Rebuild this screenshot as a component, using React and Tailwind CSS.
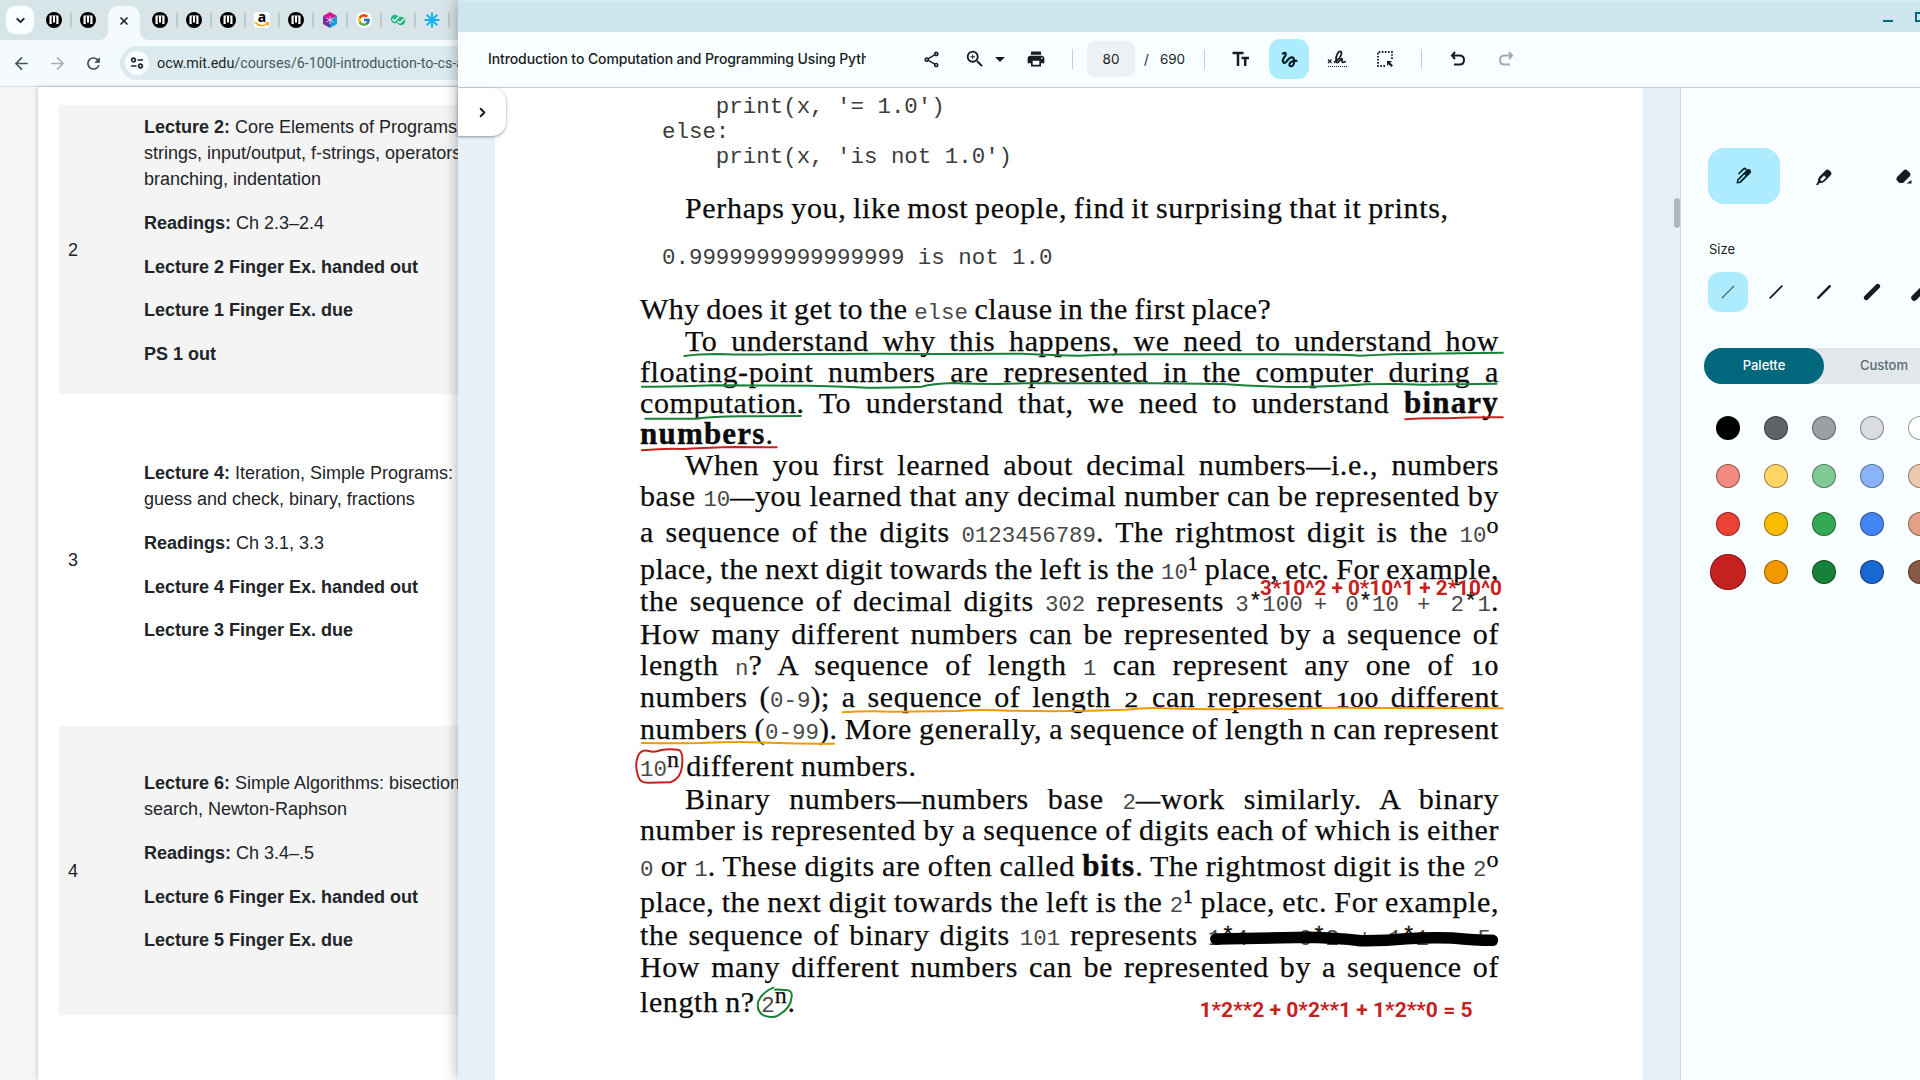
import React from "react";
import { ChevronDown, X, ArrowLeft, ArrowRight, ChevronRight } from "lucide-react";
import {
  MdOutlineShare, MdOutlineZoomIn, MdPrint, MdArrowDropDown, MdRefresh, MdGesture,
} from "react-icons/md";
import { FcGoogle } from "react-icons/fc";

const M = ({ children, className = "" }) => (
  <span className={`font-['Liberation_Mono',monospace] text-[22.450px] leading-none text-[#484848] tracking-normal [word-spacing:0px] [-webkit-text-stroke:0px] ${className}`}>{children}</span>
);
const A = () => <span className="align-[3px] leading-[0] text-[#111] [-webkit-text-stroke:0.3px_#111]">*</span>;
const Sup = ({ children }) => <span className="align-[9px] text-[24px] leading-[0]">{children}</span>;
const SupOne = () => <span className="align-[9px] text-[19px] leading-[0] [-webkit-text-stroke:0.5px_black]">1</span>;
const Old = ({ children, className = "mx-[3px]" }) => <span className={`inline-block scale-x-[1.25] text-[22px] leading-none tracking-[0.5px] [-webkit-text-stroke:0.4px_black] ${className}`}>{children}</span>;
const B = ({ children }) => <b className="text-[31px] leading-none tracking-[1.2px] [-webkit-text-stroke:0.4px_#0c0c0c]">{children}</b>;
const Dash = () => <span className="text-[24px] leading-none align-[1px] [-webkit-text-stroke:0.5px_#0c0c0c]">—</span>;

const Mit = () => (
  <svg width="16" height="16" viewBox="0 0 16 16">
    <circle cx="8" cy="8" r="8" fill="#000" />
    <path d="M3.500 3.500h9V12h-2.300V5.700H9.200V10.500H6.800V5.700H5.800V12H3.500z" fill="#fff" />
    <path d="M6.300 4v7M9.700 4v7" stroke="#000" strokeWidth="1" />
  </svg>
);
const Amazon = () => (
  <span className="flex h-4 w-4 items-center justify-center rounded-sm bg-white">
    <svg width="16" height="16" viewBox="0 0 16 16">
      <text x="8" y="9.500" textAnchor="middle" fontSize="14" fontWeight="700" fontFamily="Open Sans, sans-serif">a</text>
      <path d="M1 10.500q6 5.500 12 1.500M11.500 11h3l-.6 2.700" fill="none" stroke="#f90" strokeWidth="1.500" />
    </svg>
  </span>
);
const Cube = () => (
  <svg width="16" height="16" viewBox="0 0 16 16">
    <path d="M8 0l7 4-7 4-7-4z" fill="#d6158c" />
    <path d="M1 4l7 4v8l-7-4z" fill="#6d2fa0" />
    <path d="M15 4L8 8v8l7-4z" fill="#15a0d8" />
    <path d="M8 4v8M4.500 6l7 4M11.500 6l-7 4" stroke="#f3c9ee" strokeWidth="1" />
  </svg>
);
const GoogleTab = () => <span className="flex h-4 w-4 items-center justify-center rounded-full bg-white"><FcGoogle size={14} /></span>;
const Gfg = () => (
  <svg width="16" height="16" viewBox="0 0 16 16">
    <circle cx="5" cy="7" r="4.200" fill="#1eb980" />
    <circle cx="11" cy="9" r="4.200" fill="#1eb980" />
    <path d="M2.500 7l2 2 4-4M7.500 9l2.500 2 4-4" fill="none" stroke="#fff" strokeWidth="1.300" />
  </svg>
);
const Star = () => (
  <svg width="16" height="16" viewBox="0 0 16 16">
    <path d="M8 .5v15M.5 8h15M2.800 2.800l10.400 10.400M13.200 2.800L2.800 13.200" stroke="#12aef0" strokeWidth="2" />
  </svg>
);

const tabs = [Mit, Mit, Mit, Amazon, Mit, Cube, GoogleTab, Gfg, Star];

const TabIcon = ({ children }) => (
  <div className="flex h-7 w-[34px] shrink-0 items-center">
    <div className="flex w-[32px] justify-center">{children}</div>
    <div className="h-4 w-[2px] bg-[#c3c9ca]" />
  </div>
);

const P = ({ b, children }) => (
  <p className="mb-[17.8px] whitespace-nowrap"><b>{b}</b>{children}</p>
);

const Row = ({ n, shaded, className, children }) => (
  <div className={`flex pl-[9px] ${shaded ? "bg-[#f4f4f4]" : "bg-white"} ${className}`}>
    <div className="flex w-[76px] shrink-0 items-center">{n}</div>
    <div>{children}</div>
  </div>
);

function Browser() {
  return (
    <div className="flex h-full w-[458px] shrink-0 flex-col overflow-hidden bg-[#f5fafd]">
      <div className="flex h-10 w-[520px] shrink-0 items-center bg-[#d7e5e8] pl-[6px]">
        <div className="flex h-7 w-7 items-center justify-center rounded-[9px] bg-[#f8fdff]"><ChevronDown size={13} strokeWidth={3.5} color="#1b2225" /></div>
        <div className="w-1" />
        <TabIcon><Mit /></TabIcon>
        <div className="flex w-[28px] shrink-0 items-center justify-center pl-[4px]"><Mit /></div>
        <div className="-mr-1 flex h-full w-[48px] shrink-0 items-end">
          <div className="h-[10px] w-[8px] bg-[#f5fafd]"><div className="h-full w-full rounded-br-[9px] bg-[#d7e5e8]" /></div>
          <div className="flex h-[34px] w-8 items-center justify-center rounded-t-[10px] bg-[#f5fafd] pb-[5px]"><X size={12} strokeWidth={3.4} color="#20292c" /></div>
          <div className="h-[10px] w-[8px] bg-[#f5fafd]"><div className="h-full w-full rounded-bl-[9px] bg-[#d7e5e8]" /></div>
        </div>
        {tabs.map((T, i) => <TabIcon key={i}><T /></TabIcon>)}
      </div>
      <div className="flex h-[46px] shrink-0 items-center pl-[12px]">
        <ArrowLeft size={19} strokeWidth={2.1} color="#40565c" className="shrink-0" />
        <ArrowRight size={19} strokeWidth={2.1} color="#a9b0b2" className="ml-[17px] shrink-0" />
        <MdRefresh size={19} color="#35494e" className="ml-[17px] shrink-0" />
        <div className="ml-[17px] flex h-[34px] w-[400px] shrink-0 items-center rounded-l-full bg-[#dbeaef] pl-[5px]">
          <div className="flex h-6 w-6 items-center justify-center rounded-full bg-[#f8fdff]">
            <svg width="14" height="14" viewBox="0 0 14 14" fill="none" stroke="#20292c" strokeWidth="1.700">
              <circle cx="3.500" cy="4" r="1.800" /><path d="M7.500 4H13M1 10h5.500" /><circle cx="10.500" cy="10" r="1.800" />
            </svg>
          </div>
          <span className="ml-2 whitespace-nowrap pt-px font-[Roboto,sans-serif] text-[14.300px] text-[#465a60]"><span className="text-[#1c2527]">ocw.mit.edu</span>/courses/6-100l-introduction-to-cs-and</span>
        </div>
      </div>
      <div className="flex flex-1 border-t border-[#d0dfe4] bg-[#f5f5f5] pl-[38px]">
        <div className="w-[482px] shrink-0 bg-white pl-[21px] pt-[18px] font-['Liberation_Sans',sans-serif] text-[18px] leading-[26px] text-[#212529] shadow-[0_0_4px_rgba(0,0,0,0.25)]">
          <Row n="2" shaded className="h-[289px] [&>div:last-child]:pt-[9px]">
            <P b="Lecture 2:"> Core Elements of Programs<br />strings, input/output, f-strings, operators<br />branching, indentation</P>
            <P b="Readings:"> Ch 2.3–2.4</P>
            <P b="Lecture 2 Finger Ex. handed out" /><P b="Lecture 1 Finger Ex. due" /><P b="PS 1 out" />
          </Row>
          <Row n="3" className="h-[332px] [&>div:last-child]:pt-[66px]">
            <P b="Lecture 4:"> Iteration, Simple Programs:<br />guess and check, binary, fractions</P>
            <P b="Readings:"> Ch 3.1, 3.3</P>
            <P b="Lecture 4 Finger Ex. handed out" /><P b="Lecture 3 Finger Ex. due" />
          </Row>
          <Row n="4" shaded className="h-[289px] [&>div:last-child]:pt-[44px]">
            <P b="Lecture 6:"> Simple Algorithms: bisection<br />search, Newton-Raphson</P>
            <P b="Readings:"> Ch 3.4–.5</P>
            <P b="Lecture 6 Finger Ex. handed out" /><P b="Lecture 5 Finger Ex. due" />
          </Row>
        </div>
      </div>
    </div>
  );
}

const Line = ({ h, children, indent, natural }) => (
  <div className={`flex items-end ${h} ${indent ? "pl-[45px]" : ""}`}>
    <div className={`h-[31px] whitespace-nowrap leading-[31px] ${natural ? "" : "w-full text-justify [text-align-last:justify]"}`}>{children}</div>
  </div>
);

const Code = ({ h, children }) => (
  <div className={`flex items-end pl-[22px] ${h}`}>
    <div className="h-[31px] whitespace-pre font-['Liberation_Mono',monospace] text-[22.450px] leading-[31px] tracking-normal text-[#3c3c3c] [word-spacing:0px] [-webkit-text-stroke:0px]">{children}</div>
  </div>
);

function Page() {
  return (
    <div className="relative w-[1148px] shrink-0 overflow-hidden bg-white">
      <div className="ml-[145px] w-[859px] font-['Liberation_Serif',serif] text-[30px] tracking-[0.6px] text-[#0c0c0c] [-webkit-text-stroke:0.25px_#0c0c0c] [word-spacing:-1.5px]">
        <Code h="h-[35px]">{"    print(x, '= 1.0')"}</Code>
        <Code h="h-[25px]">{"else:"}</Code>
        <Code h="h-[25px]">{"    print(x, 'is not 1.0')"}</Code>
        <Line h="h-[50px]" indent natural><span className="tracking-[0.660px]">Perhaps you, like most people, find it surprising that it prints,</span></Line>
        <Code h="h-[51px]">0.9999999999999999 is not 1.0</Code>
        <Line h="h-[50px]" natural><span className="tracking-[0.500px]">Why does it get to the <M>else</M> clause in the first place?</span></Line>
        <Line h="h-[32px]" indent>To understand why this happens, we need to understand how</Line>
        <Line h="h-[31px]">floating-point numbers are represented in the computer during a</Line>
        <Line h="h-[31px]">computation. To understand that, we need to understand <B>binary</B></Line>
        <Line h="h-[31px]" natural><B>numbers</B>.</Line>
        <Line h="h-[31px]" indent>When you first learned about decimal numbers<Dash />i.e., numbers</Line>
        <Line h="h-[31px]">base <M>10</M><Dash />you learned that any decimal number can be represented by</Line>
        <Line h="h-[36px]">a sequence of the digits <M>0123456789</M>. The rightmost digit is the <M>10</M><Sup>o</Sup></Line>
        <Line h="h-[37px]"><span className="tracking-[0.450px] [word-spacing:-2px]">place, the next digit towards the left is the <M>10</M><SupOne /> place, etc. For example,</span></Line>
        <Line h="h-[32px]">the sequence of decimal digits <M>302</M> represents <M>3<A />100</M><M className="ml-[11px]">+</M><M className="ml-[18px]">0<A />10</M><M className="ml-[18px]">+</M><M className="ml-[20px]">2<A />1</M>.</Line>
        <Line h="h-[33px]">How many different numbers can be represented by a sequence of</Line>
        <Line h="h-[31px]">length <M>n</M>? A sequence of length <M>1</M> can represent any one of <Old className="ml-[3px] mr-[3px]">10</Old></Line>
        <Line h="h-[32px]">numbers (<M>0-9</M>); a sequence of length <Old>2</Old> can represent <Old className="mx-[5px]">100</Old> different</Line>
        <Line h="h-[32px]">numbers (<M>0-99</M>). More generally, a sequence of length n can represent</Line>
        <Line h="h-[37px]" natural><M>10</M><Sup>n</Sup> different numbers.</Line>
        <Line h="h-[33px]" indent>Binary numbers<Dash />numbers base <M>2</M><Dash />work similarly. A binary</Line>
        <Line h="h-[31px]">number is represented by a sequence of digits each of which is either</Line>
        <Line h="h-[36px]"><M>0</M> or <M>1</M>. These digits are often called <B>bits</B>. The rightmost digit is the <M>2</M><Sup>o</Sup></Line>
        <Line h="h-[36px]">place, the next digit towards the left is the <M>2</M><SupOne /> place, etc. For example,</Line>
        <Line h="h-[33px]">the sequence of binary digits <M>101</M> represents <M>1<A />4</M><M className="ml-[20px]">+</M><M className="ml-[17px]">0<A />2</M><M className="ml-[19px]">+</M><M className="ml-[17px]">1<A />1</M><M className="ml-[20px]">=</M><M className="ml-[15px]">5</M>.</Line>
        <Line h="h-[32px]">How many different numbers can be represented by a sequence of</Line>
        <Line h="h-[35px]" natural>length n? <M>2</M><Sup>n</Sup>.</Line>
      </div>
      <svg className="absolute inset-0" width="1148" height="992" viewBox="495 88 1148 992" fill="none" strokeLinecap="round" strokeLinejoin="round">
        <g transform="translate(620 180) scale(.574 .33333)" strokeWidth="2">
          <g stroke="#188038">
            <path vectorEffect="non-scaling-stroke" d="M112 528Q135 522 170 522Q215 525 260 523L450 521L550 522L700 521Q760 526 800 527Q860 523 910 523L1150 523Q1240 523 1290 527Q1350 521 1400 521L1538 518" />
            <path vectorEffect="non-scaling-stroke" d="M38 620Q100 621 165 616L330 617Q400 620 430 623Q500 622 525 620Q545 611 580 609Q650 614 700 610L930 610L1050 612Q1110 620 1190 621Q1240 619 1300 613Q1350 611 1400 614L1527 611" />
            <path vectorEffect="non-scaling-stroke" d="M44 716L130 716Q160 710 210 709L315 708" />
          </g>
          <g stroke="#c5221f">
            <path vectorEffect="non-scaling-stroke" d="M1368 718Q1400 713 1440 715Q1490 711 1538 712" />
            <path vectorEffect="non-scaling-stroke" d="M38 811Q80 804 110 807Q160 802 200 801L273 802" />
          </g>
        </g>
        <g transform="translate(620 450) scale(.574 .33333)" strokeWidth="2" stroke="#f29900">
          <path vectorEffect="non-scaling-stroke" d="M388 787Q430 781 475 785Q550 784 590 783Q620 778 680 782Q780 786 880 779Q920 772 950 775Q1000 778 1060 778Q1120 773 1170 777Q1240 772 1300 774L1538 775" />
          <path vectorEffect="non-scaling-stroke" d="M38 879Q90 881 140 879Q200 874 260 878Q320 882 373 881" />
        </g>
        <g transform="translate(620 750) scale(.574 .33333)">
          <path vectorEffect="non-scaling-stroke" stroke="#c5221f" strokeWidth="2" d="M72 0Q60 8 50 3Q36 -4 31 20Q25 48 32 80Q35 99 50 98L88 97Q106 85 108 50Q111 2 101 -1Q85 -4 72 0" />
          <path vectorEffect="non-scaling-stroke" stroke="#188038" strokeWidth="2" d="M267 713Q247 728 241 754Q237 783 250 796Q265 806 275 797Q298 775 299 740Q301 717 285 720Q276 717 270 719" />
          <path vectorEffect="non-scaling-stroke" stroke="#000" strokeWidth="11.500" d="M1038 567L1200 562Q1250 564 1290 572Q1330 573 1370 566Q1410 562 1450 564Q1490 571 1520 571" />
        </g>
        <g fill="#c5221f" fontFamily="Roboto, sans-serif" fontWeight="700" fontSize="20.500">
          <text x="1260" y="594.500" textLength="242" lengthAdjust="spacingAndGlyphs">3*10^2 + 0*10^1 + 2*10^0</text>
          <text x="1199.500" y="1016.500" textLength="273" lengthAdjust="spacingAndGlyphs">1*2**2 + 0*2**1 + 1*2**0 = 5</text>
        </g>
      </svg>
    </div>
  );
}

const Divider = ({ className = "" }) => <div className={`h-5 w-px shrink-0 bg-[#c5d0d4] ${className}`} />;
const Ic = ({ w, children }) => <div className={`flex h-10 shrink-0 items-center justify-center ${w}`}>{children}</div>;

function Toolbar() {
  return (
    <div className="flex h-[56px] shrink-0 items-center border-b border-[#c3cfd2] bg-[#f8fdff] pb-px pl-[30px] text-[#171d1e]">
      <div className="w-[378px] shrink-0 overflow-hidden whitespace-nowrap pb-px font-[Inter,sans-serif] text-[14px] font-medium tracking-[-0.1px]">Introduction to Computation and Programming Using Python</div>
      <Ic w="ml-[45px] w-[40px]"><MdOutlineShare size={19} /></Ic>
      <Ic w="ml-[4px] w-[40px]"><MdOutlineZoomIn size={22} /></Ic>
      <Ic w="w-[10px]"><MdArrowDropDown size={24} className="shrink-0" /></Ic>
      <Ic w="ml-[11px] w-[40px]"><MdPrint size={20} /></Ic>
      <Divider className="ml-[16px]" />
      <div className="ml-[14px] flex h-9 w-12 shrink-0 items-center justify-center rounded-lg bg-[#edf1f3] font-[Inter,sans-serif] text-[13.500px]">80</div>
      <div className="flex w-[69px] shrink-0 items-center gap-[11px] whitespace-pre pl-[9px] font-[Inter,sans-serif] text-[13.500px]"><span>/</span><span>690</span></div>
      <Divider />
      <Ic w="ml-[16px] w-10">
        <svg width="20" height="18" viewBox="0 0 20 18" stroke="currentColor" strokeWidth="2.500"><path d="M1.500 3h11M7 3V16M10.500 8h7.500M14.200 8V16" /></svg>
      </Ic>
      <div className="ml-[8px] flex h-10 w-10 shrink-0 items-center justify-center rounded-[11px] bg-[#adecff] text-[#001f27]">
        <MdGesture size={21} />
      </div>
      <Ic w="ml-[8px] w-10">
        <svg width="20" height="18" viewBox="0 0 20 18" fill="none" stroke="currentColor"><path d="M1 9.500l3.500 3.500M4.500 9.500L1 13" strokeWidth="1.200" /><path d="M7 12.500Q14 8 14.500 3.500Q14.500 .8 12.500 1.500Q9 4 9 10Q9 13 11 12.500L14 9Q15.500 8 15 11Q15 13 17 12L19 11.500" strokeWidth="1.800" /><path d="M1 16.500h19" strokeWidth="1.200" strokeDasharray="1 1" /></svg>
      </Ic>
      <Ic w="ml-[8px] w-10">
        <svg width="18" height="18" viewBox="0 0 18 18" fill="none" stroke="currentColor"><path d="M9 16H2V2h14v8" strokeWidth="1.800" strokeDasharray="1.600 1.500" /><path d="M11 11h5l-1.700 1.700 2.700 2.700-1.600 1.600-2.700-2.700L11 16z" fill="currentColor" stroke="none" /></svg>
      </Ic>
      <Divider className="ml-[16px]" />
      <Ic w="ml-[16px] w-10"><svg width="16" height="16" viewBox="0 0 16 16" fill="none" stroke="currentColor" strokeWidth="2"><path d="M5 1L2 4.500L5 8M2 4.500H9.500Q14 4.500 14 9Q14 13.500 9.500 13.500H4" /></svg></Ic>
      <Ic w="ml-[8px] w-10"><svg width="16" height="16" viewBox="0 0 16 16" fill="none" stroke="#a6abad" strokeWidth="2"><path d="M11 1L14 4.500L11 8M14 4.500H6.500Q2 4.500 2 9Q2 13.500 6.500 13.500H12" /></svg></Ic>
    </div>
  );
}

const colors = [
  ["#000000", "#5f6368", "#9aa0a6", "#dadce0", "#ffffff"],
  ["#f28b82", "#fdd663", "#81c995", "#8ab4f8", "#eec9ae"],
  ["#ea4335", "#fbbc04", "#34a853", "#4285f4", "#e2a185"],
  ["#c5221f", "#f29900", "#188038", "#1967d2", "#885945"],
];

function Panel() {
  return (
    <div className="flex w-[240px] shrink-0 flex-col overflow-hidden border-l border-[#cdd9dd] bg-[#f8fdff] font-[Inter,sans-serif] text-[13px] text-[#171d1e]">
      <div className="ml-[27px] mt-[60px] flex h-14 w-[300px] shrink-0 gap-2">
        <div className="flex w-[72px] items-center justify-center rounded-[16px] bg-[#adecff] text-[#001f27]">
          <svg width="18" height="18" viewBox="0 0 18 18"><path d="M1.500 16.500l.6-4L12 2.600q1.500-1.400 3 0l.5.6q1.400 1.500 0 3L5.600 16z" fill="currentColor" /><path d="M3.500 14.500L10 8" stroke="#adecff" strokeWidth="1.600" /><path d="M3.500 7l5-5q1-1 2 0l1 .8" fill="none" stroke="currentColor" strokeWidth="1.700" /></svg>
        </div>
        <div className="flex w-[72px] items-center justify-center pt-[2px]">
          <svg width="18" height="18" viewBox="0 0 18 18"><path d="M1 17l2-3.500q-.5-2.500 1.500-5l6-6q2-2 4 0l1 1q2 2 0 4l-6 6q-2.500 2-5 1.500L3 17z" fill="currentColor" /><path d="M9 7.500l2 2-4 4-2-2z" fill="#f8fdff" /></svg>
        </div>
        <div className="flex w-[72px] items-center justify-center pt-[2px]">
          <svg width="18" height="18" viewBox="0 0 18 18"><path d="M2 9l6.500-6.500q2-2 4 0l2 2q2 2 0 4L8 15H4.500L2 12.500Q.5 11 2 9zM16.500 12v3.500h-5z" fill="currentColor" /></svg>
        </div>
      </div>
      <div className="ml-[28px] mt-[36px] h-[18px] leading-[18px]">Size</div>
      <div className="ml-[27px] mt-[14px] flex w-[300px] shrink-0 gap-2">
        {[1.2, 1.7, 2.4, 4.8, 6].map((s, i) => (
          <div key={i} className={`flex h-10 w-10 items-center justify-center rounded-xl ${i === 0 ? "bg-[#adecff]" : ""}`}>
            <svg width="20" height="20" viewBox="0 0 20 20"><path d="M4.200 15.800l11.600-11.600" stroke={i ? "#171d1e" : "#3a5b66"} strokeWidth={s} strokeLinecap="round" /></svg>
          </div>
        ))}
      </div>
      <div className="ml-[23px] mt-[36px] flex h-9 w-[240px] shrink-0 rounded-full bg-[#e1e7ea] font-medium">
        <div className="flex w-[120px] items-center justify-center rounded-full bg-[#00677d] text-white">Palette</div>
        <div className="flex w-[120px] items-center justify-center text-[#576a70]">Custom</div>
      </div>
      <div className="ml-[23px] mt-[20px] grid w-[240px] shrink-0 grid-cols-5">
        {colors.flat().map((c, i) => (
          <div key={c} className="flex h-12 items-center justify-center">
            <div className={`rounded-full border border-black/40 ${i === 15 ? "h-9 w-9" : "h-6 w-6"}`} style={{ backgroundColor: c }} />
          </div>
        ))}
      </div>
    </div>
  );
}

function Viewer() {
  return (
    <div className="relative z-10 flex h-full w-[1462px] shrink-0 flex-col bg-[#e8f0f7] shadow-[0_0_14px_rgba(0,0,0,0.35)]">
      <div className="flex h-8 shrink-0 items-center justify-end overflow-hidden border-t border-[#dcedf2] bg-[#cee6ed]">
        <div className="mt-[8px] h-[2px] w-[10px] bg-[#00677d]" />
        <div className="-mr-[5px] ml-[22px] h-[10px] w-[10px] border-2 border-[#00677d]" />
      </div>
      <Toolbar />
      <div className="flex h-[992px]">
        <div className="w-[37px] shrink-0">
          <div className="relative z-10 flex h-12 w-12 items-center justify-center rounded-r-[14px] bg-white shadow-[0_1px_3px_rgba(0,0,0,0.4)]"><ChevronRight size={15} strokeWidth={3} color="#171d1e" /></div>
        </div>
        <Page />
        <div className="flex w-[37px] shrink-0 justify-end pt-[110px]"><div className="h-[30px] w-[6px] rounded-full bg-[#adb9ba]" /></div>
        <Panel />
      </div>
    </div>
  );
}

export default function App() {
  return (
    <div className="flex h-[1080px] w-[1920px] overflow-hidden bg-white">
      <Browser />
      <Viewer />
    </div>
  );
}
